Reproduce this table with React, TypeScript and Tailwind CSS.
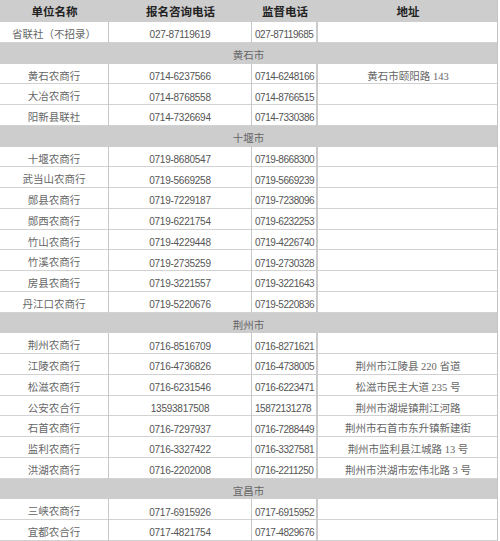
import React from 'react';

type Row =
  | { kind: 'section'; label: string }
  | { kind: 'bank'; name: string; apply: string; supervise: string; address?: string };

const rows: Row[] = [
  { kind: 'bank', name: '省联社（不招录）', apply: '027-87119619', supervise: '027-87119685' },
  { kind: 'section', label: '黄石市' },
  { kind: 'bank', name: '黄石农商行', apply: '0714-6237566', supervise: '0714-6248166', address: '黄石市颐阳路 143' },
  { kind: 'bank', name: '大冶农商行', apply: '0714-8768558', supervise: '0714-8766515' },
  { kind: 'bank', name: '阳新县联社', apply: '0714-7326694', supervise: '0714-7330386' },
  { kind: 'section', label: '十堰市' },
  { kind: 'bank', name: '十堰农商行', apply: '0719-8680547', supervise: '0719-8668300' },
  { kind: 'bank', name: '武当山农商行', apply: '0719-5669258', supervise: '0719-5669239' },
  { kind: 'bank', name: '郧县农商行', apply: '0719-7229187', supervise: '0719-7238096' },
  { kind: 'bank', name: '郧西农商行', apply: '0719-6221754', supervise: '0719-6232253' },
  { kind: 'bank', name: '竹山农商行', apply: '0719-4229448', supervise: '0719-4226740' },
  { kind: 'bank', name: '竹溪农商行', apply: '0719-2735259', supervise: '0719-2730328' },
  { kind: 'bank', name: '房县农商行', apply: '0719-3221557', supervise: '0719-3221643' },
  { kind: 'bank', name: '丹江口农商行', apply: '0719-5220676', supervise: '0719-5220836' },
  { kind: 'section', label: '荆州市' },
  { kind: 'bank', name: '荆州农商行', apply: '0716-8516709', supervise: '0716-8271621' },
  { kind: 'bank', name: '江陵农商行', apply: '0716-4736826', supervise: '0716-4738005', address: '荆州市江陵县 220 省道' },
  { kind: 'bank', name: '松滋农商行', apply: '0716-6231546', supervise: '0716-6223471', address: '松滋市民主大道 235 号' },
  { kind: 'bank', name: '公安农合行', apply: '13593817508', supervise: '15872131278', address: '荆州市湖堤镇荆江河路' },
  { kind: 'bank', name: '石首农商行', apply: '0716-7297937', supervise: '0716-7288449', address: '荆州市石首市东升镇新建街' },
  { kind: 'bank', name: '监利农商行', apply: '0716-3327422', supervise: '0716-3327581', address: '荆州市监利县江城路 13 号' },
  { kind: 'bank', name: '洪湖农商行', apply: '0716-2202008', supervise: '0716-2211250', address: '荆州市洪湖市宏伟北路 3 号' },
  { kind: 'section', label: '宜昌市' },
  { kind: 'bank', name: '三峡农商行', apply: '0717-6915926', supervise: '0717-6915952' },
  { kind: 'bank', name: '宜都农合行', apply: '0717-4821754', supervise: '0717-4829676' },
];

const cjk = "font-['Liberation_Serif','Noto_Sans_CJK_SC',serif] text-[10.5px] text-[#666] whitespace-nowrap";
const num = "font-['Liberation_Sans',sans-serif] text-[10px] text-[#555] whitespace-nowrap";

export default function App() {
  return (
    <div className="w-[500px] h-[541px] overflow-hidden bg-white">
      <div className="w-[498px] border-r border-[#c4c4c4]">
        {/* header */}
        <div className="grid grid-cols-[109px_143px_66px_180px] h-[22px] bg-[#cdcdcd] text-[11.5px] font-bold text-[#222] font-['Noto_Sans_CJK_SC',sans-serif] whitespace-nowrap">
          <div className="flex items-center justify-center pt-[2px]">单位名称</div>
          <div className="flex items-center justify-center pt-[2px]">报名咨询电话</div>
          <div className="flex items-center justify-center pt-[2px]">监督电话</div>
          <div className="flex items-center justify-center pt-[2px]">地址</div>
        </div>

        {rows.map((r, i) =>
          r.kind === 'section' ? (
            <div
              key={i}
              className={`h-[20.75px] bg-[#cdcdcd] flex items-center justify-center pt-[5px] ${cjk}`}
            >
              {r.label}
            </div>
          ) : (
            <div
              key={i}
              className="grid grid-cols-[109px_143px_66px_180px] h-[20.75px] border-b border-[#d2d2d2]"
            >
              <div className={`flex items-center justify-center pt-[5px] border-r border-[#c8c8c8] ${cjk}`}>
                {r.name}
              </div>
              <div className={`flex items-center justify-center pt-[5px] border-r border-[#c8c8c8] tracking-[-0.25px] ${num}`}>
                {r.apply}
              </div>
              <div className={`flex items-center pl-[3px] pt-[5px] border-r-2 border-[#cbcbcb] tracking-[-0.45px] ${num}`}>
                {r.supervise}
              </div>
              <div className={`flex items-center justify-center pt-[5px] ${cjk}`}>
                {r.address ?? ''}
              </div>
            </div>
          )
        )}
      </div>
    </div>
  );
}
